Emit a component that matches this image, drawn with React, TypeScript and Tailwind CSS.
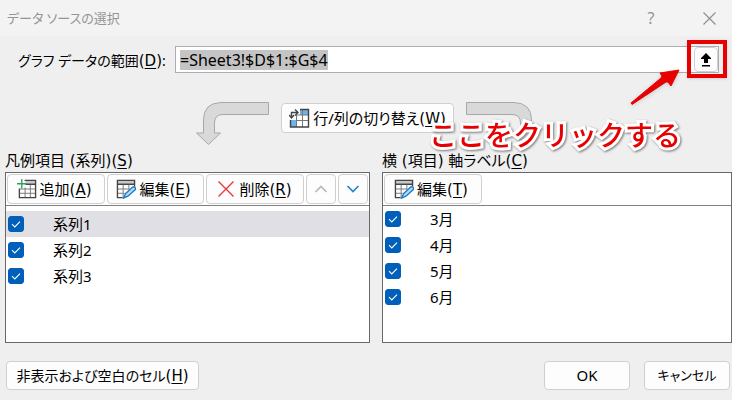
import React, { useEffect, useRef } from 'react';

interface ToolButtonProps {
  children: React.ReactNode;
  className?: string;
  label?: string;
  disabled?: boolean;
}

interface CheckRowProps {
  label: string;
  selected?: boolean;
}

const series = ["系列1", "系列2", "系列3"];
const categories = ["3月", "4月", "5月", "6月"];

// Keyboard accelerator, e.g. (A)
const Key = ({ k }: { k: string }) => (
  <span className="font-['DejaVu_Sans',sans-serif] text-[15px] leading-none">(<span className="underline underline-offset-2">{k}</span>)</span>
);

const ToolButton = ({ children, className = "h-[30px]", label, disabled }: ToolButtonProps) => (
  <button
    type="button"
    aria-label={label}
    disabled={disabled}
    className={`flex items-center justify-center whitespace-nowrap rounded border border-[#d0d0d0] bg-[#fdfdfd] ${className}`}
  >
    {children}
  </button>
);

const CheckRow = ({ label, selected }: CheckRowProps) => (
  <label className={`flex h-[26px] items-center gap-[29px] pl-0.5 ${selected ? "bg-[#e0dfe4]" : ""}`}>
    <span className="grid">
      <input
        type="checkbox"
        defaultChecked
        className="col-start-1 row-start-1 size-4 appearance-none rounded-[3px] border border-[#005fb8] checked:bg-[#005fb8]"
      />
      <svg viewBox="0 0 16 16" className="pointer-events-none col-start-1 row-start-1 size-4" fill="none" stroke="#fff" strokeWidth="1.1">
        <path d="M4 8.2 6.8 11 12 5.6" />
      </svg>
    </span>
    <span>{label}</span>
  </label>
);

const AddIcon = () => (
  <svg width="20" height="20" viewBox="0 0 21 21" fill="none">
    <path d="M9 1h11v4H9z" fill="#c8c8c8" />
    <path d="M2.5 10v9.5h17V1.5H8M9 5.5h10.5" stroke="#444" strokeWidth="1.4" />
    <path d="M3 10.5h16M3 15h16M8.5 9v10M14 6v13" stroke="#777" />
    <path d="M5 0v10M0 5h10" stroke="#2e9e5b" strokeWidth="1.4" />
  </svg>
);

const EditIcon = () => (
  <svg width="20" height="20" viewBox="0 0 21 21" fill="none">
    <path d="M1 1h19v4H1z" fill="#c8c8c8" />
    <path d="M7 19.5H1.5v-18h18V8M1.5 5.5h18" stroke="#444" strokeWidth="1.4" />
    <path d="M2 10.5h12M2 15h7M7.5 6v13M13.5 6v5" stroke="#777" />
    <path d="M8 20 10 15.5 17.5 8.5q1.5-.8 2.5.3t0 2.6L12.5 18z" fill="#b5dcf7" stroke="#1979ca" strokeWidth="1.4" />
  </svg>
);

const SwapIcon = () => (
  <svg width="21" height="20" viewBox="0 0 21 20" fill="none">
    <path d="M8 7h12v12H8z" fill="#fff" />
    <path d="M11 1h9v6h-9zM1 12h7v7H1z" fill="#6db4ea" />
    <path d="M8 7h11.5M7 12.5h12.5M13.5 1v18M7.5 7v12" stroke="#777" />
    <path d="M11 1.5h8.5V19h-18v-7" stroke="#444" strokeWidth="1.4" />
    <path d="M2.5 9.5v-5h6M0 7l2.5 3L5 7M6 1.5l3 3-3 3" stroke="#444" strokeWidth="1.4" />
  </svg>
);

const DeleteIcon = () => (
  <svg width="16" height="16" viewBox="0 0 16 16" stroke="#e8383d" strokeWidth="1.4">
    <path d="m.5.5 15 15M15.5.5l-15 15" />
  </svg>
);

const Chevron = ({ down }: { down?: boolean }) => (
  <svg width="14" height="8" viewBox="0 0 14 8" fill="none" stroke={down ? "#2088d0" : "#b8b8b8"} strokeWidth="1.7">
    <path d={down ? "m1.5 1 5.5 5.5L12.5 1" : "M1.5 7 7 1.5 12.5 7"} />
  </svg>
);

const BentArrow = ({ className = "" }: { className?: string }) => (
  <svg width="74" height="44" viewBox="0 0 74 44" className={className}>
    <path
      d="M73.5.5H26Q8.5 1 8.5 18v13H1.5L13.5 42.5 25.5 31H19.5V21Q19.5 12.5 28 12.5H73.5z"
      fill="#d9d9d9"
      stroke="#a8a8a8"
    />
  </svg>
);

const App = () => {
  const rangeRef = useRef<HTMLInputElement>(null);

  useEffect(() => {
    rangeRef.current?.focus();
    rangeRef.current?.select();
  }, []);

  return (
    <div className="min-h-screen bg-[#efefef] font-['Noto_Sans','Noto_Sans_CJK_JP',sans-serif] text-[15px] leading-5 text-black [font-feature-settings:'palt']">
      <header className="flex h-9 items-center justify-between bg-[#f3f3f3] pl-[7px] pr-4 text-[#959595]">
        <h1 className="text-[13px]">データ ソースの選択</h1>
        <div className="flex items-center gap-11">
          <button type="button" aria-label="ヘルプ" className="w-4 text-base">?</button>
          <button type="button" aria-label="閉じる">
            <svg width="13" height="13" viewBox="0 0 13 13" stroke="#8f8f8f" strokeWidth="1.2">
              <path d="m.5.5 12 12M12.5.5l-12 12" />
            </svg>
          </button>
        </div>
      </header>

      <main className="relative pb-2">
        <div className="flex items-center pl-[18px] pr-[13px] pt-[10px]">
          <label htmlFor="range" className="w-[157px] shrink-0 whitespace-nowrap pt-0.5 text-sm">
            グラフ データの範囲<Key k="D" />:
          </label>
          <div className="flex h-[27px] flex-1 items-center border border-[#abadb3] bg-white">
            <input
              id="range"
              ref={rangeRef}
              defaultValue="=Sheet3!$D$1:$G$4"
              className="h-5 min-w-0 flex-1 pl-1 text-base leading-5 outline-none selection:bg-[#c4c4c4] selection:text-black"
            />
            <div className="relative">
              <ToolButton label="範囲を選択" className="h-[25px] w-6">
                <svg width="10" height="14" viewBox="0 0 10 14">
                  <path d="M5 0 10 5v1H7v4H3V6H0V5zM1 12h8v1.5H1z" />
                </svg>
              </ToolButton>
              <div className="pointer-events-none absolute -bottom-[6px] -left-[7px] -right-[9px] -top-[7px] border-4 border-[#e60000] shadow-sm" />
            </div>
          </div>
        </div>

        <div className="flex items-start pl-[195px] pt-[29px]">
          <BentArrow />
          <ToolButton className="mx-3 mt-px h-[30px] w-[173px] gap-[3px]">
            <SwapIcon />
            <span>行/列の切り替え<Key k="W" /></span>
          </ToolButton>
          <BentArrow className="-scale-x-100" />
        </div>

        <div className="grid grid-cols-[364fr_349fr] gap-x-3 pl-[5px] pt-[5px]">
          <section>
            <h2 className="pb-px font-['DejaVu_Sans','Noto_Sans_CJK_JP',sans-serif]">凡例項目 (系列)<Key k="S" /></h2>
            <div className="h-[171px] border border-[#696969] bg-white">
              <div className="flex gap-0.5 border-b border-[#808080] p-px">
                <ToolButton className="h-[30px] w-[98px] gap-[3px] pr-1"><AddIcon /><span>追加<Key k="A" /></span></ToolButton>
                <ToolButton className="h-[30px] w-[97px] gap-[3px] pr-1"><EditIcon /><span>編集<Key k="E" /></span></ToolButton>
                <ToolButton className="h-[30px] w-[98px] gap-[5px]"><DeleteIcon /><span>削除<Key k="R" /></span></ToolButton>
                <ToolButton label="上へ" className="h-[30px] w-[30px]" disabled><Chevron /></ToolButton>
                <ToolButton label="下へ" className="h-[30px] w-[30px]"><Chevron down /></ToolButton>
              </div>
              <div className="pt-[5px]">
                {series.map((s, i) => (
                  <CheckRow key={s} label={s} selected={i === 0} />
                ))}
              </div>
            </div>
          </section>

          <section>
            <h2 className="pb-px font-['DejaVu_Sans','Noto_Sans_CJK_JP',sans-serif]">横 (項目) 軸ラベル<Key k="C" /></h2>
            <div className="h-[171px] border border-[#696969] bg-white">
              <div className="flex border-b border-[#808080] p-px">
                <ToolButton className="h-[30px] w-[98px] gap-[3px] pr-1"><EditIcon /><span>編集<Key k="T" /></span></ToolButton>
              </div>
              {categories.map((c) => (
                <CheckRow key={c} label={c} />
              ))}
            </div>
          </section>
        </div>

        <footer className="flex gap-[14px] pl-[6px] pr-0.5 pt-[18px] text-sm">
          <ToolButton className="mr-auto h-[29px] w-[193px]">
            <span>非表示および空白のセル<Key k="H" /></span>
          </ToolButton>
          <ToolButton className="h-[29px] w-[86px] text-[15px]">OK</ToolButton>
          <ToolButton className="h-[29px] w-[86px] text-[13px]">キャンセル</ToolButton>
        </footer>

        {/* callout over the dialog */}
        <svg width="50" height="36" viewBox="0 0 50 36" className="pointer-events-none absolute right-[52px] top-[33px] drop-shadow-sm">
          <path d="M1 34 31 9 32 7 30 4 49 1 41 17 38 13 36 13 2 35.5z" fill="#e60000" stroke="#e60000" strokeLinejoin="round" />
        </svg>
        <p className="pointer-events-none absolute right-[51px] top-[80px] whitespace-nowrap font-['Noto_Sans_CJK_JP',sans-serif] text-[28px] font-medium leading-9 text-[#e60000] drop-shadow-[1px_1px_1px_#777] [-webkit-text-stroke:6px_white] [font-feature-settings:normal] [paint-order:stroke_fill]">
          ここをクリックする
        </p>
      </main>
    </div>
  );
};

export default App;
